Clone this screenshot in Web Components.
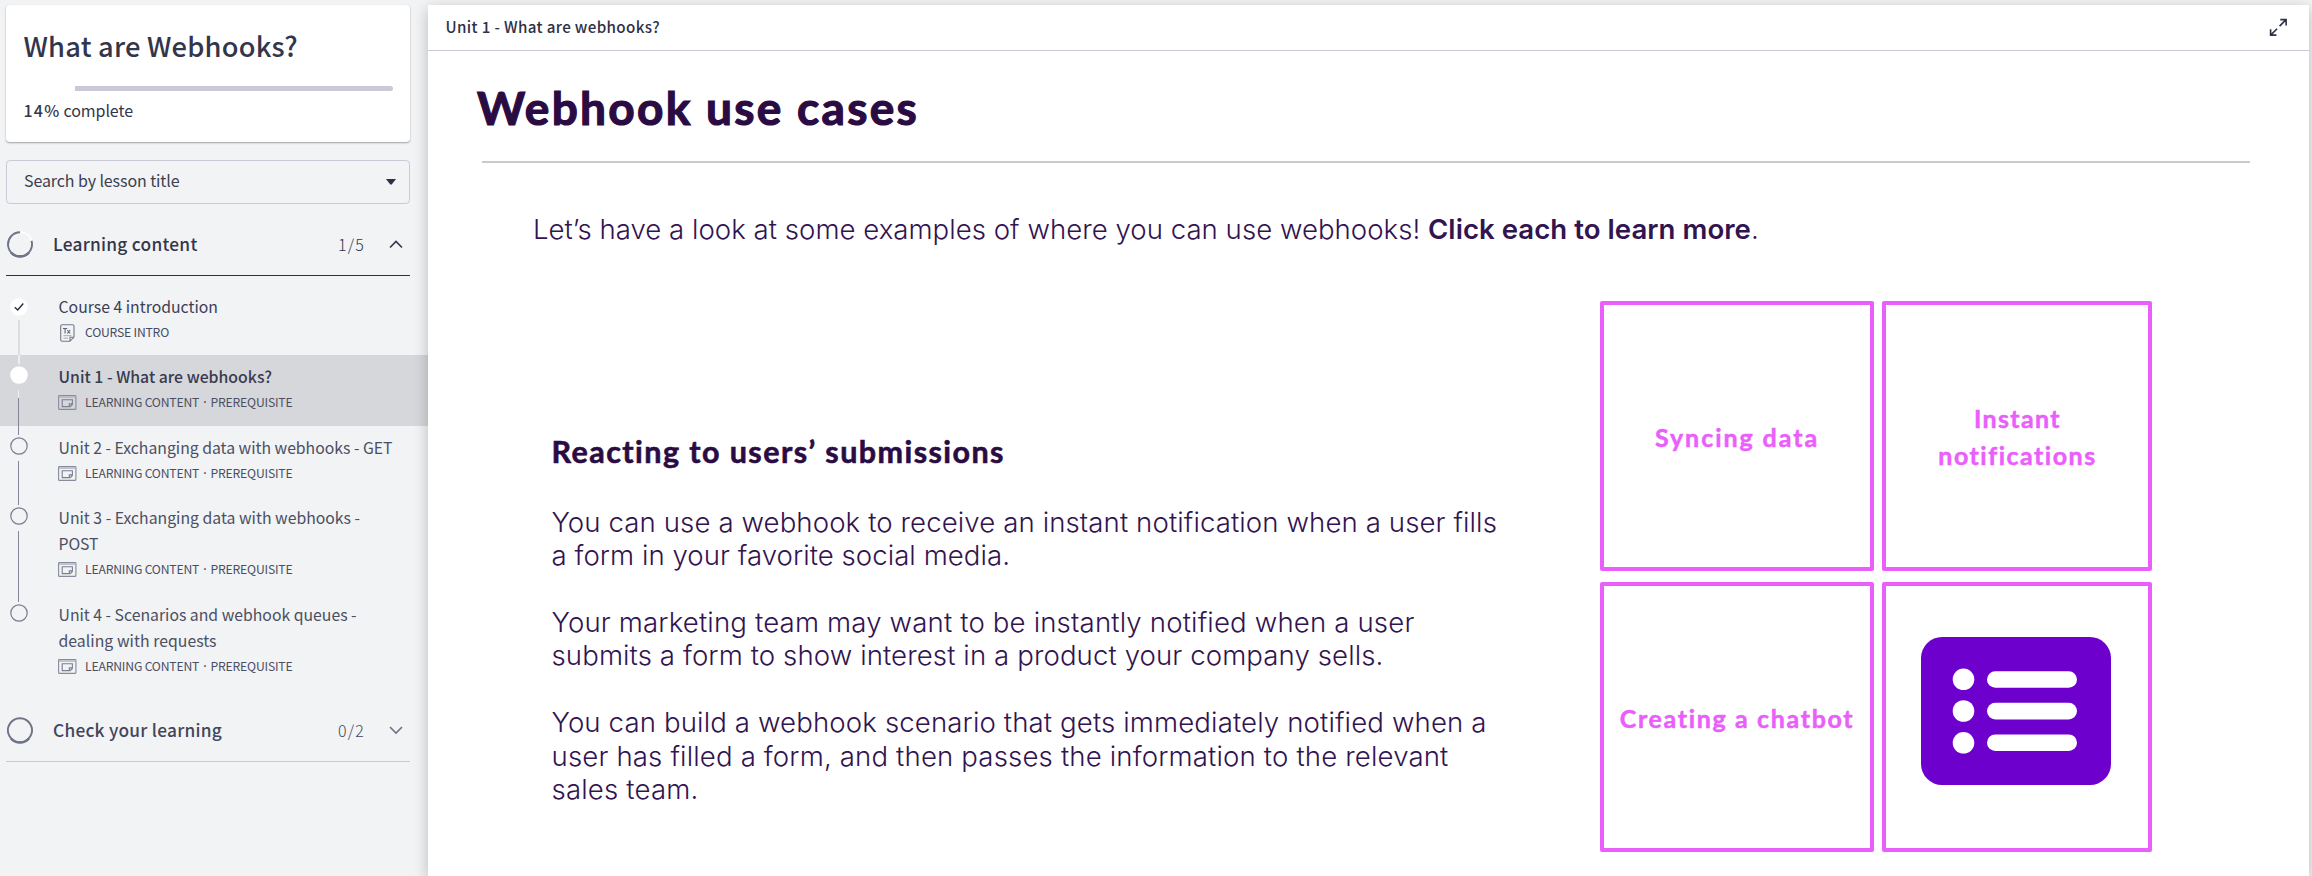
<!DOCTYPE html>
<html lang="en">
<head>
<meta charset="utf-8">
<title>What are Webhooks?</title>
<style>
body{margin:0;background:#f1f3f5;overflow:hidden}
</style>
</head>
<body>
<course-app></course-app>
<script>
function define(name, html, setup){
  const t = document.createElement('template');
  t.innerHTML = html;
  customElements.define(name, class extends HTMLElement{
    connectedCallback(){
      if(this.shadowRoot) return;
      this.attachShadow({mode:'open'}).appendChild(t.content.cloneNode(true));
      if(setup) setup(this, this.shadowRoot);
    }
  });
}

/* One line of text; tracking is adjusted so the line spans the width in "w". */
define('text-line', `<style>:host{display:block;white-space:nowrap}span{display:inline-block;line-height:inherit;vertical-align:top}</style><span><slot></slot></span>`,
(el, root) => {
  const s = root.querySelector('span');
  const w = +el.getAttribute('w');
  if(!w) return;
  const n = el.textContent.length;
  s.style.letterSpacing = ((w - s.getBoundingClientRect().width) / n).toFixed(3) + 'px';
});

define('progress-card', `<style>
:host{display:block;box-sizing:border-box;width:404px;height:137px;background:#fff;border-radius:4px;box-shadow:0 1px 2px rgba(0,0,0,.35);padding:20px 17px 0 17px;color:#33364b}
.title{font-size:27.3px;font-weight:500;line-height:40px;margin-left:.5px}
.track{height:5px;margin-top:21px;display:flex}
.done{width:52px}.rest{width:318px;background:#c9cad6;border-radius:0 3px 3px 0}
.pct{font-size:16px;line-height:24px;margin:7px 0 0 .5px;display:flex;gap:3px}
b{font-weight:500}
</style>
<text-line class="title" w="274.5">What are Webhooks?</text-line>
<div class="track"><div class="done"></div><div class="rest"></div></div>
<div class="pct"><text-line w="37"><b>14%</b></text-line><text-line w="69.5">complete</text-line></div>`);

define('lesson-search', `<style>
:host{display:flex;align-items:center;justify-content:space-between;box-sizing:border-box;width:404px;height:44px;margin-top:18px;border:1px solid #c9cad6;border-radius:4px;padding:0 13px 0 17px;color:#3c3f52;font-size:16px;line-height:24px}
text-line{margin-top:-5px}
</style><text-line w="155.5">Search by lesson title</text-line>
<svg width="10" height="6"><path d="M0 0H10L5.7 5.5H4.3Z" fill="#2d3047"/></svg>`);

define('section-header', `<style>
:host{display:flex;box-sizing:border-box;width:404px;height:62px;border-bottom:1px solid #2d3047;align-items:flex-start;color:#33364b}
:host([closed]){border-color:#c8cacc;color:#43465b}
svg{display:block}
.ring{margin:17px 0 0 1px;width:26px;height:27px}
.name{font-size:17.3px;font-weight:500;line-height:26px;margin:16.5px 0 0 20px;flex:1}
.count{font-size:16px;line-height:26px;margin-top:16.5px;width:51px;font-weight:300}
.chev{margin:26px 7px 0 0}
:host([closed]) .up{display:none}:host(:not([closed])) .down{display:none}
</style>
<svg class="ring" viewBox="0 0 26 27"><g fill="none" stroke="#6f7385"><path class="arc" stroke-width="1.9"/><path d="M4 21.5A12 12 0 0 0 22 21.5" stroke-width="2.4"/></g><path class="gap" d="M14 1.3A12 12 0 0 1 24.4 9.4" fill="none" stroke="#fff" stroke-width="1.6"/></svg>
<text-line class="name"></text-line>
<text-line class="count"></text-line>
<svg class="chev" width="14" height="9"><path class="up" d="M1 7.5L7 1.5L13 7.5" fill="none" stroke="#33364b" stroke-width="1.6"/><path class="down" d="M1 1L7 7L13 1" fill="none" stroke="#6f7385" stroke-width="1.6"/></svg>`,
(el, root) => {
  const closed = el.hasAttribute('closed');
  root.querySelector('.arc').setAttribute('d', closed ? 'M13 1.3A12 12 0 1 1 12.9 1.3Z' : 'M13 1.3A12 12 0 1 0 24.5 9.8');
  if(closed) root.querySelector('.gap').remove();
  const n = root.querySelector('.name'); n.textContent = el.getAttribute('label');
  const c = root.querySelector('.count'); c.textContent = el.getAttribute('count');
  for(const [x, w] of [[n, +el.getAttribute('w')], [c, 27]]){
    const s = x.shadowRoot.querySelector('span');
    s.style.letterSpacing = ((w - s.getBoundingClientRect().width) / x.textContent.length) + 'px';
  }
});

define('lesson-item', `<style>
:host{display:flex;width:428px;height:70px;color:#4c4f63}
:host([tall]){height:97px}:host([mid]){height:71px}
:host([selected]){background:#d5d7db}
.rail{width:58px;display:flex;flex-direction:column;align-items:center;box-sizing:border-box;padding-right:20.6px}
.stub{width:1px;background:#83869a;height:9px;flex:none}
.rail svg{flex:none;margin:2px 0 6px;display:block}
.stub.b{flex:1}
:host([first]) .stub.a{visibility:hidden}
:host([first]) .rail svg{margin:4px 0 4px}
:host([first]) .stub.b{background:#dcdee1;width:2px}
:host([selected]) .stub.a{background:#eceef0;width:2px}
:host([selected]) .stub.b{background:linear-gradient(#eceef0 8px,#83869a 8px)}
:host([last]) .stub.b{visibility:hidden}
.body{padding:9px 0 0 .5px}
.title{font-size:15.8px;line-height:26px}
:host([first]) .title{color:#3c3f55}
:host([selected]) .title{font-weight:500;color:#383b50}
.meta{display:flex;align-items:flex-start;height:19px;padding-top:4px}
.meta svg{flex:none;display:block;margin-left:-.5px}
.meta text-line{font-size:12.2px;line-height:18px;margin:-1px 0 0 8px}
.dot{margin:0 4px;font-weight:500;font-family:"Noto Sans",sans-serif}
:host([first]) .meta text-line{color:#474a60}
</style>
<div class="rail"><div class="stub a"></div><svg width="18" height="18" viewBox="0 0 18 18"></svg><div class="stub b"></div></div>
<div class="body"><div class="meta"></div></div>`,
(el, root) => {
  const first = el.hasAttribute('first'), sel = el.hasAttribute('selected');
  root.querySelector('.rail svg').innerHTML = first
    ? '<circle cx="9" cy="9" r="8.8" fill="#fff"/><path d="M4.8 9.3L7.7 12L13.3 5.4" fill="none" stroke="#2d3047" stroke-width="1.5"/>'
    : sel ? '<circle cx="9" cy="9" r="8.8" fill="#fff"/>' : '<circle cx="9" cy="9" r="8.2" fill="none" stroke="#797c90" stroke-width="1.2"/>';
  const body = root.querySelector('.body'), meta = root.querySelector('.meta');
  for(const part of el.getAttribute('lines').split('|')){
    const [text, w] = part.split('~');
    const l = document.createElement('text-line');
    l.className = 'title'; l.setAttribute('w', w); l.textContent = text;
    body.insertBefore(l, meta);
  }
  meta.innerHTML = first
    ? '<svg width="19" height="18" viewBox="0 0 19 18"><path d="M4.2.7H14.5Q16 .7 16 2.2V13L12 17.3H4.2Q2.7 17.3 2.7 15.8V2.2Q2.7.7 4.2.7ZM12 17V13.2H16" fill="none" stroke="#74788c" stroke-width="1.1"/><path d="M5 4.5H9.2M7.1 4.5V9.5M9.3 6L12.2 9.5M12.2 6L9.3 9.5" fill="none" stroke="#62667b" stroke-width="1.1"/><path d="M5.5 11.7H13.5M5.5 14.2H10" stroke="#a5a8b6"/></svg><text-line w="84">COURSE INTRO</text-line>'
    : '<svg width="19" height="17" viewBox="0 0 19 17"><rect x=".6" y="1.6" width="17.3" height="13.8" rx=".6" fill="none" stroke="#888b9c" stroke-width="1.1"/><path d="M1 3.1H17.5" stroke="#b7bac4" stroke-width="1.5"/><path d="M4.2 5.8H14.4V10.5L12.2 12.6H4.2ZM11.3 12.3V9.9H14.2" fill="none" stroke="#7b7e92" stroke-width="1.1"/></svg><text-line w="207.5">LEARNING CONTENT<span class="dot">·</span>PREREQUISITE</text-line>';
});

define('course-sidebar', `<style>
:host{display:block;width:428px;height:871px;padding-top:5px;flex:none;font-family:"Noto Sans CJK SC","Source Sans Pro",sans-serif}
.inset{margin-left:6px}
.list{padding-top:9px;height:405px}
section-header{margin-top:10px}
</style>
<div class="inset"><progress-card></progress-card><lesson-search></lesson-search>
<section-header label="Learning content" count="1/5" w="144.5"></section-header></div>
<div class="list">
<lesson-item first lines="Course 4 introduction~159.5"></lesson-item>
<lesson-item mid selected lines="Unit 1 - What are webhooks?~213.5"></lesson-item>
<lesson-item lines="Unit 2 - Exchanging data with webhooks - GET~334"></lesson-item>
<lesson-item tall lines="Unit 3 - Exchanging data with webhooks -~301.5|POST~40"></lesson-item>
<lesson-item tall last lines="Unit 4 - Scenarios and webhook queues -~298|dealing with requests~158"></lesson-item>
</div>
<div class="inset"><section-header closed label="Check your learning" count="0/2" w="169"></section-header></div>`);

define('viewer-header', `<style>
:host{display:flex;justify-content:space-between;box-sizing:border-box;height:46px;border-bottom:1px solid #c9cad6;padding:9px 21px 0 17.5px;font-family:"Noto Sans CJK SC","Source Sans Pro",sans-serif;color:#2d3047}
text-line{font-size:15.2px;font-weight:500;line-height:24px;margin-top:-.5px}
svg{margin-top:3.5px}
</style><text-line w="214.5">Unit 1 - What are webhooks?</text-line>
<svg width="19" height="19" viewBox="0 0 19 19"><path d="M10.6 8.1L16.8 1.9M11.3 1.6H17.1V7.4M8.1 10.7L1.9 16.9M1.6 11.3V17.1H7.4" fill="none" stroke="#2d3047" stroke-width="1.6"/></svg>`);

define('topic-tile', `<style>
:host{display:flex;flex-direction:column;justify-content:center;align-items:center;box-sizing:border-box;border:4px solid #ea5ffb;border-radius:2px;color:#ea5ffb;font-family:Lato,sans-serif;font-size:25px;font-weight:700;line-height:37px;padding:2px 0 0 1px;-webkit-text-stroke:.5px}
:host([picture]){padding:0 2px 12px 0}
</style><slot></slot>`);

define('form-icon', `<style>:host{display:block}svg{display:block}</style>
<svg width="190" height="148" viewBox="0 0 190 148"><rect width="190" height="148" rx="21" fill="#6d00cc"/><g fill="#fff"><circle cx="42.5" cy="42.3" r="10.8"/><circle cx="42.5" cy="74" r="10.8"/><circle cx="42.5" cy="105.8" r="10.8"/><rect x="66" y="34.2" width="90" height="16.6" rx="8.3"/><rect x="66" y="65.8" width="90" height="16.6" rx="8.3"/><rect x="66" y="97.4" width="90" height="16.6" rx="8.3"/></g></svg>`);

define('use-case-slide', `<style>
:host{display:block;font-family:Inter,sans-serif;color:#2a0c43}
.h1{font-family:Lato,sans-serif;font-size:46px;font-weight:700;line-height:60px;margin:27px 0 0 49px;-webkit-text-stroke:1.2px}
hr{border:0;height:2px;background:#cdc8ca;width:1768px;margin:23px 0 0 54px}
.intro{display:flex;font-size:27.6px;font-weight:300;line-height:36px;margin:48px 0 0 105px;color:#321450}
.intro b{font-weight:600}
.cols{display:flex;margin-top:54px}
.copy{width:1048px;padding:131px 0 0 123.5px;font-size:27.6px;font-weight:300;line-height:33.5px;color:#321450}
.h2{font-family:Lato,sans-serif;font-size:30.5px;font-weight:700;line-height:38px;margin-bottom:35.6px;color:#2a0c43;-webkit-text-stroke:.6px}
.p{margin-bottom:33.4px}
.tiles{display:grid;grid-template-columns:274px 270px;grid-template-rows:270px 270px;gap:11px 8.5px;flex:none}
</style>
<text-line class="h1" w="442">Webhook use cases</text-line>
<hr>
<div class="intro"><text-line w="895">Let’s have a look at some examples of where you can use webhooks!&nbsp;</text-line><text-line w="323"><b>Click each to learn more</b></text-line><text-line>.</text-line></div>
<div class="cols"><div class="copy">
<text-line class="h2" w="454">Reacting to users’ submissions</text-line>
<div class="p"><text-line w="945.5">You can use a webhook to receive an instant notification when a user fills</text-line><text-line w="458.5">a form in your favorite social media.</text-line></div>
<div class="p"><text-line w="863">Your marketing team may want to be instantly notified when a user</text-line><text-line w="832">submits a form to show interest in a product your company sells.</text-line></div>
<div class="p"><text-line w="935">You can build a webhook scenario that gets immediately notified when a</text-line><text-line w="897">user has filled a form, and then passes the information to the relevant</text-line><text-line w="147">sales team.</text-line></div>
</div>
<div class="tiles">
<topic-tile><text-line w="164">Syncing data</text-line></topic-tile>
<topic-tile><text-line w="87">Instant</text-line><text-line w="159">notifications</text-line></topic-tile>
<topic-tile><text-line w="235">Creating a chatbot</text-line></topic-tile>
<topic-tile picture><form-icon></form-icon></topic-tile>
</div></div>`);

define('lesson-viewer', `<style>
:host{display:block;width:1881px;height:871px;margin-top:5px;background:#fff;box-shadow:0 4px 14px rgba(0,0,0,.24);flex:none}
</style><viewer-header></viewer-header><use-case-slide></use-case-slide>`);

define('course-app', `<style>:host{display:flex;width:2312px;height:876px;overflow:hidden;background:#f1f3f5}</style>
<course-sidebar></course-sidebar><lesson-viewer></lesson-viewer>`);
</script>
</body>
</html>
